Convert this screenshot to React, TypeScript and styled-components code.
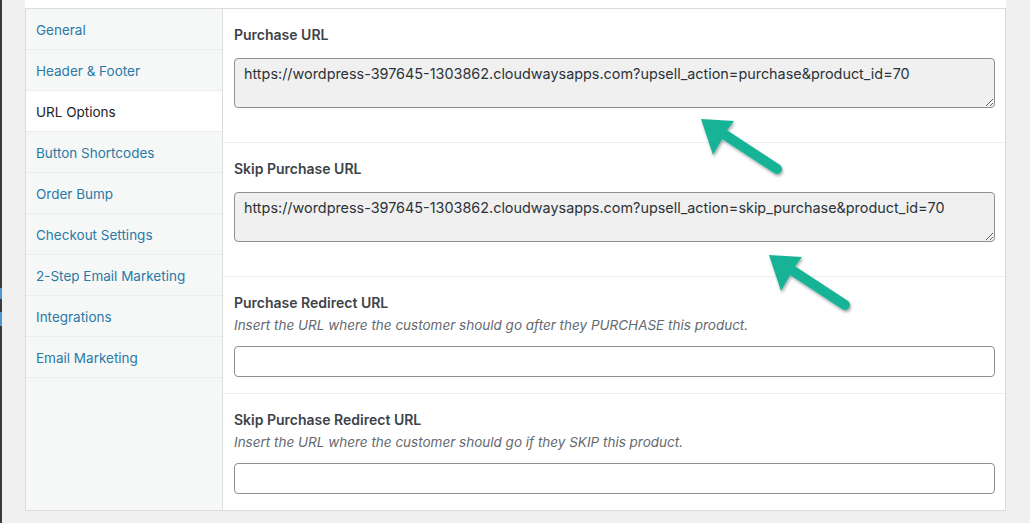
import React from 'react'
import styled, { createGlobalStyle } from 'styled-components'

const GlobalStyle = createGlobalStyle`
  html, body {
    margin: 0;
    padding: 0;
    background: #f0f0f1;
  }
  body {
    font-family: Inter, "Noto Sans", "Liberation Sans", sans-serif;
    color: #3c434a;
  }
`

const tabs = [
  'General',
  'Header & Footer',
  'URL Options',
  'Button Shortcodes',
  'Order Bump',
  'Checkout Settings',
  '2-Step Email Marketing',
  'Integrations',
  'Email Marketing',
]

const ACTIVE = 'URL Options'

const App: React.FC = () => {
  return (
    <>
      <GlobalStyle />
      <Screen>
        <AdminEdge />
        <Content>
          <TopStrip />
          <Panel>
            <Sidebar>
              {tabs.map((t) => (
                <Tab key={t} $active={t === ACTIVE}>{t}</Tab>
              ))}
            </Sidebar>
            <Main>
              <Row $extra>
                <Label>Purchase URL</Label>
                <UrlBox readOnly value="https://wordpress-397645-1303862.cloudwaysapps.com?upsell_action=purchase&product_id=70" />
              </Row>
              <Row $extra>
                <Label>Skip Purchase URL</Label>
                <UrlBox readOnly value="https://wordpress-397645-1303862.cloudwaysapps.com?upsell_action=skip_purchase&product_id=70" />
              </Row>
              <Row>
                <Label>Purchase Redirect URL</Label>
                <Hint>Insert the URL where the customer should go after they PURCHASE this product.</Hint>
                <TextInput type="text" />
              </Row>
              <Row $last>
                <Label>Skip Purchase Redirect URL</Label>
                <Hint>Insert the URL where the customer should go if they SKIP this product.</Hint>
                <TextInput type="text" />
              </Row>
              <Arrow style={{ left: 474, top: 102 }} />
              <Arrow style={{ left: 542, top: 238 }} />
            </Main>
          </Panel>
        </Content>
      </Screen>
    </>
  )
}

export default App

const Arrow: React.FC<{ style?: React.CSSProperties }> = ({ style }) => (
  <ArrowSvg width="96" height="76" viewBox="0 0 96 76" style={style}>
    <defs>
      <filter id="arrowShadow" x="-20%" y="-20%" width="150%" height="150%">
        <feDropShadow dx="1" dy="2" stdDeviation="1.6" floodColor="#000" floodOpacity="0.35" />
      </filter>
    </defs>
    <g filter="url(#arrowShadow)" fill="#19b396">
      <line x1="22" y1="20" x2="80" y2="58" stroke="#19b396" strokeWidth="10" strokeLinecap="round" />
      <polygon points="4,8 37,10 31,18 16,44" />
    </g>
  </ArrowSvg>
)

const ArrowSvg = styled.svg`
  position: absolute;
  pointer-events: none;
  overflow: visible;
`

const Screen = styled.div`
  display: flex;
  width: 1030px;
  height: 523px;
  overflow: hidden;
`

const AdminEdge = styled.div`
  width: 2px;
  flex: none;
  background: linear-gradient(
    to bottom,
    #3a3b3d 0,
    #3a3b3d 288px,
    #4f94d4 288px,
    #4f94d4 299px,
    #3a3b3d 299px,
    #3a3b3d 312px,
    #4f94d4 312px,
    #4f94d4 326px,
    #3a3b3d 326px
  );
`

const Content = styled.div`
  display: flex;
  flex-direction: column;
  padding-left: 23px;
  width: 981px;
`

const TopStrip = styled.div`
  height: 8px;
  background: #fff;
  border-bottom: 1px solid #dcdcde;
`

const Panel = styled.div`
  display: flex;
  background: #fff;
  border: 1px solid #dcdcde;
  border-top: none;
  height: 502px;
  box-sizing: border-box;
`

const Sidebar = styled.ul`
  list-style: none;
  margin: 0;
  padding: 0;
  width: 196px;
  flex: none;
  background: #f6f7f7;
  border-right: 1px solid #dcdcde;
`

const Tab = styled.li<{ $active?: boolean }>`
  height: 40px;
  line-height: 42px;
  padding-left: 10px;
  font-size: 13.5px;
  color: ${(p) => (p.$active ? '#1d2327' : '#2a7aa6')};
  background: ${(p) => (p.$active ? '#fff' : 'transparent')};
  border-bottom: 1px solid #ebedee;
  white-space: nowrap;
`

const Main = styled.div`
  position: relative;
  flex: 1;
  display: flex;
  flex-direction: column;
`

const Row = styled.div<{ $extra?: boolean; $last?: boolean }>`
  display: flex;
  flex-direction: column;
  padding: 17px 10px ${(p) => (p.$extra ? '34px' : '16px')} 11px;
  border-bottom: ${(p) => (p.$last ? 'none' : '1px solid #ededee')};
`

const Label = styled.div`
  font-size: 14px;
  font-weight: 600;
  color: #3c434a;
  line-height: 18px;
  margin-bottom: 14px;
`

const Hint = styled.div`
  font-size: 13.5px;
  font-style: italic;
  color: #646970;
  line-height: 18px;
  margin-top: -10px;
  margin-bottom: 12px;
`

const UrlBox = styled.textarea`
  box-sizing: border-box;
  width: 100%;
  height: 50px;
  margin: 0;
  padding: 6px 9px;
  font-family: Inter, "Noto Sans", "Liberation Sans", sans-serif;
  font-size: 14.4px;
  line-height: 18px;
  color: #2c3338;
  background: #f0f0f1;
  border: 1px solid #8c8f94;
  border-radius: 4px;
  resize: vertical;
  outline: none;
`

const TextInput = styled.input`
  box-sizing: border-box;
  width: 100%;
  height: 31px;
  margin: 0;
  padding: 0 8px;
  font-family: Inter, "Noto Sans", "Liberation Sans", sans-serif;
  font-size: 14px;
  background: #fff;
  border: 1px solid #8c8f94;
  border-radius: 4px;
  outline: none;
`
